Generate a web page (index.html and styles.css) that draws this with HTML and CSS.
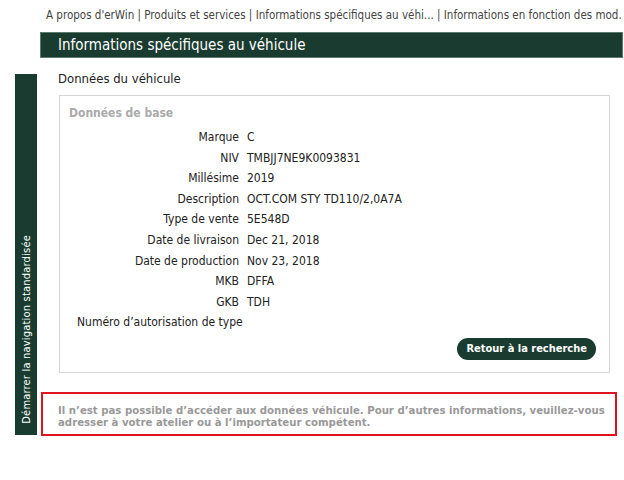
FILE: index.html
```html
<!DOCTYPE html>
<html><head>
<meta charset="utf-8">
<title>Informations spécifiques au véhicule</title>
<link rel="stylesheet" href="styles.css">
</head><body>
<div class="crumbs">A propos d'erWin | Produits et services | Informations spécifiques au véhi... | Informations en fonction des mod.</div>
<div class="titlebar">Informations spécifiques au véhicule</div>
<div class="main">
<div class="sidenav"><span>Démarrer la navigation standardisée</span></div>
<div class="content">
<h3>Données du véhicule</h3>
<div class="box">
<div class="legend">Données de base</div>
<div class="rows">
<div class="lbl">Marque</div><div class="val">C</div>
<div class="lbl">NIV</div><div class="val">TMBJJ7NE9K0093831</div>
<div class="lbl">Millésime</div><div class="val">2019</div>
<div class="lbl">Description</div><div class="val">OCT.COM STY TD110/2,0A7A</div>
<div class="lbl">Type de vente</div><div class="val">5E548D</div>
<div class="lbl">Date de livraison</div><div class="val">Dec 21, 2018</div>
<div class="lbl">Date de production</div><div class="val">Nov 23, 2018</div>
<div class="lbl">MKB</div><div class="val">DFFA</div>
<div class="lbl">GKB</div><div class="val">TDH</div>
<div class="lbl long">Numéro d’autorisation de type</div><div class="val"></div>
</div>
<div class="actions"><button class="back">Retour à la recherche</button></div>
</div>
<div class="notice">Il n’est pas possible d’accéder aux données véhicule. Pour d’autres informations, veuillez-vous adresser à votre atelier ou à l’importateur compétent.</div>
</div>
</div>
</body></html>
```

FILE: styles.css
```css
body {margin: 0; background: #fff; color: #222; font-family: "DejaVu Sans Condensed", "DejaVu Sans", sans-serif; overflow: hidden;}
.crumbs {padding: 8px 0 0 46px; height: 17px; font-size: 11.5px; color: #444; white-space: nowrap;}
.titlebar {margin: 7px 1px 0 40px; height: 24px; line-height: 24px; padding-left: 17px; background: #1a3c30; border: 1px solid #5b7a6c; color: #fff; font-size: 15px;}
.main {display: flex; margin-top: 16px;}
.sidenav {width: 22px; height: 361px; margin-left: 15px; background: #1a3c30; color: #fff; display: flex; align-items: flex-end; justify-content: center;}
.sidenav span {writing-mode: vertical-rl; transform: rotate(180deg); font-size: 11px; letter-spacing: 0.2px; padding-top: 11px; white-space: nowrap;}
.content {margin-left: 4px; width: 576px;}
h3 {margin: 0; padding: 0 0 0 17px; height: 21px; font-size: 13px; font-weight: normal; line-height: 10px; color: #222;}
.box {margin-left: 18px; width: 549px; height: 276px; border: 1px solid #d6d6d6;}
.legend {padding: 10px 0 0 9px; height: 15px; font-size: 12px; font-weight: bold; color: #aaa;}
.rows {display: grid; grid-template-columns: 179px auto; column-gap: 8px; margin-top: 6px; font-size: 12px;}
.lbl, .val {height: 20.6px; line-height: 20px; white-space: nowrap;}
.lbl {text-align: right;}
.lbl.long {text-align: left; padding-left: 17px;}
.actions {display: flex; justify-content: flex-end; padding: 5px 13px 0 0;}
.back {height: 22px; padding: 0 9px; border: 0; border-radius: 11px; background: #1a3c30; color: #fff; font-family: inherit; font-size: 11px; font-weight: bold;}
.notice {margin-top: 19px; border: 2px solid #e0141e; box-sizing: border-box; height: 44px; padding: 11px 0 0 15px; font-size: 11.3px; line-height: 12px; font-weight: bold; color: #999;}
```
